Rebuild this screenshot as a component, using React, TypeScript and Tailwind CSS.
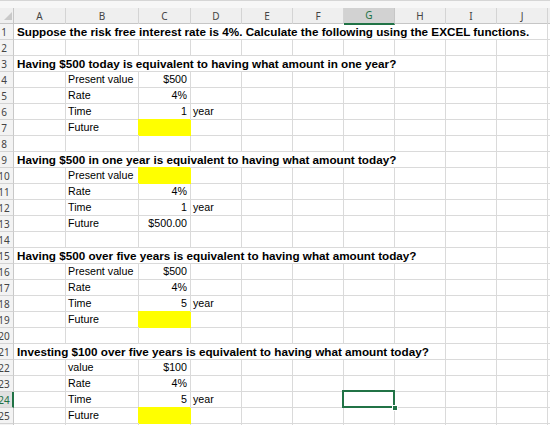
import React from "react";

const GRID =
  "grid grid-cols-[14px_52px_73px_52px_51px_51px_51px_51px_51px_51px_51px_1fr]";
const COLS = ["A", "B", "C", "D", "E", "F", "G", "H", "I", "J"];

type Row = {
  title?: string;
  span?: number;
  b?: string;
  c?: string;
  d?: string;
  yellow?: boolean;
};

const rows: Row[] = [
  {
    title:
      "Suppose the risk free interest rate is 4%. Calculate the following using the EXCEL functions.",
    span: 10,
  },
  {},
  { title: "Having $500 today is equivalent to having what amount in one year?", span: 8 },
  { b: "Present value", c: "$500" },
  { b: "Rate", c: "4%" },
  { b: "Time", c: "1", d: "year" },
  { b: "Future", yellow: true },
  {},
  { title: "Having $500 in one year is equivalent to having what amount today?", span: 8 },
  { b: "Present value", yellow: true },
  { b: "Rate", c: "4%" },
  { b: "Time", c: "1", d: "year" },
  { b: "Future", c: "$500.00" },
  {},
  { title: "Having $500 over five years is equivalent to having what amount today?", span: 8 },
  { b: "Present value", c: "$500" },
  { b: "Rate", c: "4%" },
  { b: "Time", c: "5", d: "year" },
  { b: "Future", yellow: true },
  {},
  { title: "Investing $100 over five years is equivalent to having what amount today?", span: 8 },
  { b: "value", c: "$100" },
  { b: "Rate", c: "4%" },
  { b: "Time", c: "5", d: "year" },
  { b: "Future", yellow: true },
  {},
];

const cell = "h-[16px] border-r border-b border-[#dadada] overflow-visible whitespace-nowrap";
const SPAN: Record<number, string> = { 8: "col-span-8", 10: "col-span-10" };

function RowHeader({ n, active }: { n: number; active: boolean }) {
  return (
    <div
      className={
        "h-[16px] overflow-hidden border-b border-[#d4d4d4] flex items-center " +
        (active
          ? "bg-[#e1e1e1] border-r-2 border-r-[#217346] text-[#217346]"
          : "bg-[#f3f3f3] border-r border-r-[#c8c8c8] text-[#444]")
      }
    >
      <div className="w-[20px] ml-[-6px] shrink-0 text-center text-[10px] leading-none font-['Noto_Sans',sans-serif]">
        {n}
      </div>
    </div>
  );
}

function DataRow({ r, n }: { r: Row; n: number }) {
  const active = n === 24;
  const cells: React.ReactNode[] = [];
  if (r.title) {
    cells.push(
      <div
        key="t"
        className={`${cell} ${SPAN[r.span ?? 8]} pl-[3px] flex items-center text-[11.7px] font-bold text-black`}
      >
        {r.title}
      </div>
    );
    for (let i = r.span ?? 8; i < 10; i++) cells.push(<div key={i} className={cell} />);
  } else {
    cells.push(<div key="a" className={cell} />);
    cells.push(
      <div key="b" className={`${cell} pl-[2px] flex items-center text-[10.7px] text-black`}>
        {r.b}
      </div>
    );
    cells.push(
      <div
        key="c"
        className={
          r.yellow
            ? "h-[16px] border-r border-b border-[#ffff00] bg-[#ffff00] shadow-[-1px_-1px_0_0_#ffff00]"
            : `${cell} pr-[3px] flex items-center justify-end text-[10.7px] text-black`
        }
      >
        {r.c}
      </div>
    );
    cells.push(
      <div key="d" className={`${cell} pl-[2px] flex items-center text-[10.7px] text-black`}>
        {r.d}
      </div>
    );
    for (let i = 4; i < 10; i++) {
      if (active && i === 6) {
        cells.push(
          <div key={i} className={`${cell} relative`}>
            <div className="absolute left-[-2px] top-[-2px] right-[-1px] bottom-[-1px] border-2 border-[#217346] z-10" />
            <div className="absolute right-[-4px] bottom-[-4px] w-[6px] h-[6px] bg-[#217346] border border-white z-20" />
          </div>
        );
      } else cells.push(<div key={i} className={cell} />);
    }
  }
  cells.push(<div key="z" className="h-[16px] border-b border-[#dadada]" />);
  return (
    <div className={GRID}>
      <RowHeader n={n} active={active} />
      {cells}
    </div>
  );
}

export default function App() {
  return (
    <div className="w-[550px] h-[425px] overflow-hidden bg-white font-['Liberation_Sans',Arial,sans-serif]">
      <div className="h-[8px] bg-[#f7f7f7] border-t border-[#d6d6d6]" />
      <div className={`${GRID} h-[16px] bg-[#efefef] border-b border-[#c6c6c6]`}>
        <div className="border-r border-[#c6c6c6] relative">
          <svg className="absolute left-[4px] top-[4px]" width="8" height="8" viewBox="0 0 8 8">
            <polygon points="8,0 8,8 0,8" fill="#c9c9c9" />
          </svg>
        </div>
        {COLS.map((c) => (
          <div
            key={c}
            className={
              "flex items-center justify-center text-[10px] font-['Noto_Sans',sans-serif] " +
              (c === "G"
                ? "bg-[#d2d2d2] text-[#217346] border-b-2 border-[#217346] border-r border-r-[#c6c6c6] mb-[-1px]"
                : "text-[#444] border-r border-[#d4d4d4]")
            }
          >
            {c}
          </div>
        ))}
        <div />
      </div>
      {rows.map((r, i) => (
        <DataRow key={i} r={r} n={i + 1} />
      ))}
    </div>
  );
}
